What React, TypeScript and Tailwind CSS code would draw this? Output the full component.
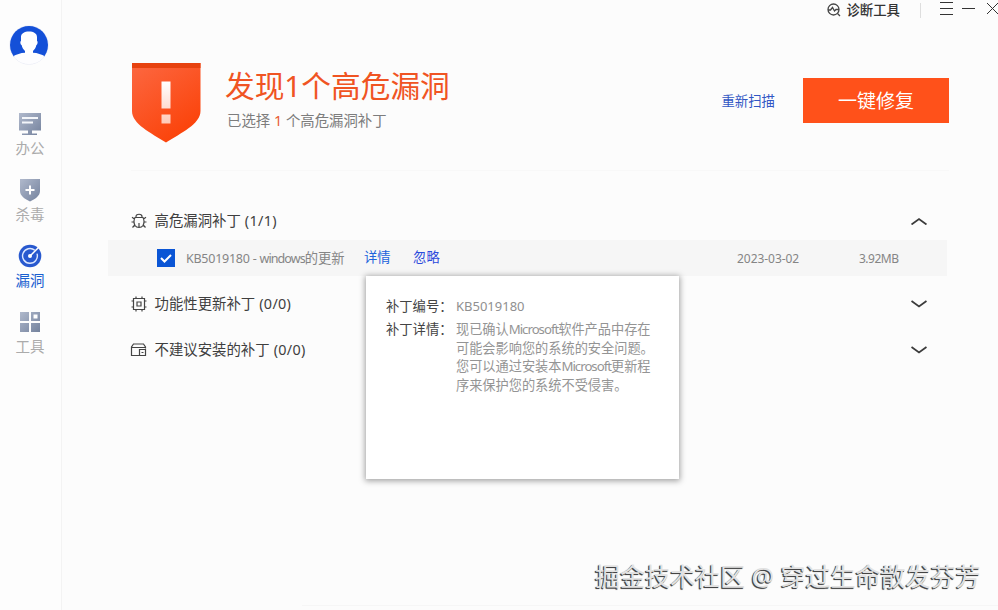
import React from "react";

const ink = "text-[#3f3f3f]";

function Avatar() {
  return (
    <svg width="40" height="40" viewBox="0 0 40 40" className="mr-[3px] block">
      <defs>
        <clipPath id="avatar">
          <circle cx="20" cy="20" r="19" />
        </clipPath>
      </defs>
      <circle cx="20" cy="20" r="19.2" fill="#fff" stroke="#dfe3f2" strokeWidth="0.6" />
      <g clipPath="url(#avatar)">
        <rect width="40" height="32" fill="#1450d8" />
        <ellipse cx="20" cy="36" rx="19" ry="8.5" fill="#fdfdff" />
        <path d="M12 12C12 8.5 15.5 6.6 20 6.6S28 8.5 28 12V16C29 16 28.8 19.500 27.400 20C27 22.500 25.500 24.500 24 26V29H16V26C14.500 24.500 13 22.500 12.600 20C11.200 19.500 11 16 12 16Z" fill="#fff" />
      </g>
    </svg>
  );
}

function Grey({ id }: { id: string }) {
  return (
    <linearGradient id={id} x1="0" y1="0" x2="1" y2="1">
      <stop offset="0" stopColor="#b0b9cc" />
      <stop offset="1" stopColor="#74829d" />
    </linearGradient>
  );
}

function MonitorIcon() {
  return (
    <svg width="24" height="24" viewBox="0 0 24 24" className="block">
      <defs><Grey id="g1" /></defs>
      <path d="M1 1H23V18.500H14V21.500H19V23H4V21.500H10V18.500H1Z" fill="url(#g1)" />
      <path d="M4 5H20V7H4ZM4 9.500H15V11.500H4Z" fill="#f4f6fa" />
    </svg>
  );
}

function ShieldIcon() {
  return (
    <svg width="24" height="24" viewBox="0 0 24 24" className="block">
      <defs><Grey id="g2" /></defs>
      <path d="M2 1H22V13C22 18 17 21 12 23.500C7 21 2 18 2 13Z" fill="url(#g2)" />
      <path d="M12 7.500V16.500M7.500 12H16.500" stroke="#fff" strokeWidth="2" />
    </svg>
  );
}

function RadarIcon() {
  return (
    <svg width="24" height="24" viewBox="0 0 24 24" className="block">
      <circle cx="12" cy="12" r="11.300" fill="#2859cf" />
      <path d="M16.800 6.300A7.400 7.400 0 1 0 19 9.600" fill="none" stroke="#dce7ff" strokeWidth="1.400" />
      <path d="M12 12L21 3" stroke="#fff" strokeWidth="1.500" />
      <circle cx="12" cy="12" r="2" fill="#fff" />
    </svg>
  );
}

function TilesIcon() {
  return (
    <svg width="24" height="24" viewBox="0 0 24 24" className="block">
      <defs><Grey id="g3" /></defs>
      <path d="M2 2H11V11H2ZM13 2H22V11H13ZM2 13H11V22H2ZM13 13H22V22H13Z" fill="url(#g3)" />
      <path d="M15.500 4.500H19.500V8.500H15.500Z" fill="#fff" />
    </svg>
  );
}

function BugIcon() {
  return (
    <svg width="16" height="16" viewBox="0 0 16 16" fill="none" stroke="#444" strokeWidth="1.200" className="block">
      <path d="M5 4.500V3.500C5 0.500 11 0.500 11 3.500V4.500M4 4.500H12C13.300 7 13.300 10 12 12.500C11 14 9.500 14.500 8 14.500S5 14 4 12.500C2.700 10 2.700 7 4 4.500ZM8 10V14.500M3.500 6L1 4.200M12.500 6L15 4.200M3 9H0.500M13 9H15.500M3.800 12L1.500 14.500M12.200 12L14.500 14.500" />
    </svg>
  );
}

function ChipIcon() {
  return (
    <svg width="16" height="16" viewBox="0 0 16 16" fill="none" stroke="#444" strokeWidth="1.200" className="block">
      <path d="M2.500 2.500H13.500V13.500H2.500ZM6 6H10V10H6ZM5 0.500V2.500M11 0.500V2.500M5 13.500V15.500M11 13.500V15.500M0.500 5H2.500M0.500 11H2.500M13.500 5H15.500M13.500 11H15.500" />
    </svg>
  );
}

function BoxIcon() {
  return (
    <svg width="17" height="16" viewBox="0 0 17 16" fill="none" stroke="#444" strokeWidth="1.200" className="-ml-px block">
      <path d="M9 13.500H1.500V5L3.500 2H13.500L15.500 5V6.500M1.500 5.500H15.500M9.500 7.500H15.500V13.500H9.500ZM11.500 10.500H13.500" />
    </svg>
  );
}

function Chevron({ up = false }: { up?: boolean }) {
  return (
    <svg width="16" height="8" viewBox="0 0 16 8" fill="none" stroke="#3b3b3b" strokeWidth="1.800" className="block">
      <path d={up ? "M0.500 7.500L8 2L15.500 7.500" : "M0.500 1L8 6.500L15.500 1"} />
    </svg>
  );
}

function NavItem({ label, active, children }: { label: string; active?: boolean; children: React.ReactNode }) {
  return (
    <div className="flex h-[66px] flex-col items-center">
      {children}
      <span className={`mt-[2px] text-[14.500px] leading-[20px] ${active ? "text-[#1a5fd0]" : "text-[#ababab]"}`}>{label}</span>
    </div>
  );
}

function Section({ icon, title, count, up }: { icon: React.ReactNode; title: string; count: string; up?: boolean }) {
  return (
    <div className="flex h-[30px] items-center pl-[69px] pr-[71px]">
      <div className="w-[23.500px]">{icon}</div>
      <span className={`text-[14.400px] ${ink}`}>{title}</span>
      <span className={`ml-1 text-[14.400px] tracking-[0.300px] ${ink}`}>{count}</span>
      <div className="ml-auto"><Chevron up={up} /></div>
    </div>
  );
}

export default function App() {
  return (
    <div className="relative flex h-[610px] w-[998px] overflow-hidden whitespace-nowrap bg-[#fcfcfc] font-['Noto_Sans','Noto_Sans_CJK_SC',sans-serif]">
      <aside className="flex w-[62px] shrink-0 flex-col items-center border-r border-[#f3f3f3] bg-[#fdfdfd] pt-[25px]">
        <Avatar />
        <nav className="mr-px mt-[47px]">
          <NavItem label="办公"><MonitorIcon /></NavItem>
          <NavItem label="杀毒"><ShieldIcon /></NavItem>
          <NavItem label="漏洞" active><RadarIcon /></NavItem>
          <NavItem label="工具"><TilesIcon /></NavItem>
        </nav>
      </aside>
      <main className="flex flex-1 flex-col">
        <header className="flex h-[20px] shrink-0 items-center justify-end text-[#333]">
          <svg width="14" height="14" viewBox="0 0 14 14" fill="none" stroke="#444" strokeWidth="1.300">
            <circle cx="6.500" cy="6.500" r="5.500" />
            <path d="M1 7H3.500L5.500 4.500L7.500 8L9 6.500H12M10.500 10.500L13 13" />
          </svg>
          <span className="ml-[5px] text-[13.400px] font-medium leading-[20px]">诊断工具</span>
          <span className="ml-[20px] h-[15px] w-px bg-[#dedede]" />
          <svg width="59" height="18" viewBox="0 0 59 18" fill="none" stroke="#333" className="ml-[18px]">
            <path d="M1 1.500H14M1 7.500H14M1 13.500H14M23 7.500H36M48 2L59 13M48 13L59 2" />
          </svg>
        </header>
        <section className="flex h-[150px] shrink-0 items-start pl-[69px] pr-[49px]">
          <svg width="70" height="80" viewBox="0 0 70 80" className="mt-[43px] block">
            <defs>
              <linearGradient id="alert" x1="0" y1="0" x2="0.600" y2="1">
                <stop offset="0" stopColor="#fc6842" />
                <stop offset="1" stopColor="#fb430a" />
              </linearGradient>
              <linearGradient id="mark" x1="0" y1="0" x2="0" y2="1">
                <stop offset="0" stopColor="#fff" />
                <stop offset="1" stopColor="#ffc9b8" />
              </linearGradient>
            </defs>
            <path d="M1 0H69.500V48C69.500 61 50 70 35 79.500C20 70 1 61 1 48Z" fill="url(#alert)" />
            <path d="M1 0H69.500V5H1Z" fill="#e7420f" />
            <path d="M30.500 18.500H39.500V45.500H30.500ZM30.500 51.500H39.500V60.500H30.500Z" fill="url(#mark)" />
          </svg>
          <div className="ml-[24px] mt-[46px]">
            <h1 className="text-[29.700px] font-normal leading-[40px] text-[#f05423]">发现1个高危漏洞</h1>
            <p className="ml-[2px] mt-[5px] text-[14.400px] leading-[20px] text-[#7d7d7d]">已选择 <span className="text-[#e95a30]">1</span> 个高危漏洞补丁</p>
          </div>
          <div className="ml-auto mt-[58px] flex items-center">
            <span className="pt-[2px] text-[13.400px] text-[#3156c4]">重新扫描</span>
            <button className="ml-[28px] h-[45px] w-[146px] bg-[#ff511a] pt-[2px] text-[19px] text-white">一键修复</button>
          </div>
        </section>
        <div className="ml-[69px] mr-[49px] h-px shrink-0 bg-[#f8f8f8]" />
        <div className="mt-[35px]">
          <Section icon={<BugIcon />} title="高危漏洞补丁" count="(1/1)" up />
          <div className="ml-[46px] mr-[51px] mt-[4px] flex h-[36px] items-center bg-[#f6f6f6] text-[13.300px] text-[#858585]">
            <span className="ml-[49px] flex h-[18px] w-[18px] items-center justify-center bg-[#0a55d5]">
              <svg width="12" height="9" viewBox="0 0 12 9" fill="none" stroke="#fff" strokeWidth="2"><path d="M1 4L4.500 7.500L11 1" /></svg>
            </span>
            <span className="ml-[11px] w-[178px] pt-px text-[12.500px]"><span className="tracking-[-0.250px]">KB5019180 - </span><span className="tracking-[-0.900px]">windows</span><span className="text-[13.300px]">的更新</span></span>
            <span className="text-[#2163dc]">详情</span>
            <span className="ml-[22.500px] text-[#2c4bdc]">忽略</span>
            <span className="ml-auto w-[122px] pt-px text-[12px] tracking-[-0.050px]">2023-03-02</span>
            <span className="w-[88px] pt-px text-[12px] tracking-[-0.500px]">3.92MB</span>
          </div>
          <div className="mt-[13px]"><Section icon={<ChipIcon />} title="功能性更新补丁" count="(0/0)" /></div>
          <div className="mt-[16px]"><Section icon={<BoxIcon />} title="不建议安装的补丁" count="(0/0)" /></div>
        </div>
        <div className="ml-[240px] mt-auto h-px bg-[#f6f6f6] mb-[4px]" />
      </main>
      <div className="absolute left-[366px] top-[276px] h-[203px] w-[313px] bg-white pl-[20px] pt-[20px] text-[13.300px] shadow-[0_1px_6px_1px_rgba(0,0,0,0.360)]">
        <div className="flex leading-[20px]">
          <span className="w-[70px] text-[#444]">补丁编号：</span>
          <span className="text-[13px] text-[#909090]">KB5019180</span>
        </div>
        <div className="mt-[4px] flex leading-[18.700px]">
          <span className="w-[70px] text-[#444]">补丁详情：</span>
          <p className="text-[13.200px] text-[#949494]">
            现已确认<span className="tracking-[-1px]">Microsoft</span>软件产品中存在<br />
            可能会影响您的系统的安全问题。<br />
            您可以通过安装本<span className="tracking-[-1px]">Microsoft</span>更新程<br />
            序来保护您的系统不受侵害。
          </p>
        </div>
      </div>
      <div className="absolute left-[595px] top-[559px] text-[25px] leading-[34px] text-[#e2e2e2] [text-shadow:-1px_1px_0_#444,-1px_1px_1px_#555]">掘金技术社区 @ 穿过生命散发芬芳</div>
    </div>
  );
}
